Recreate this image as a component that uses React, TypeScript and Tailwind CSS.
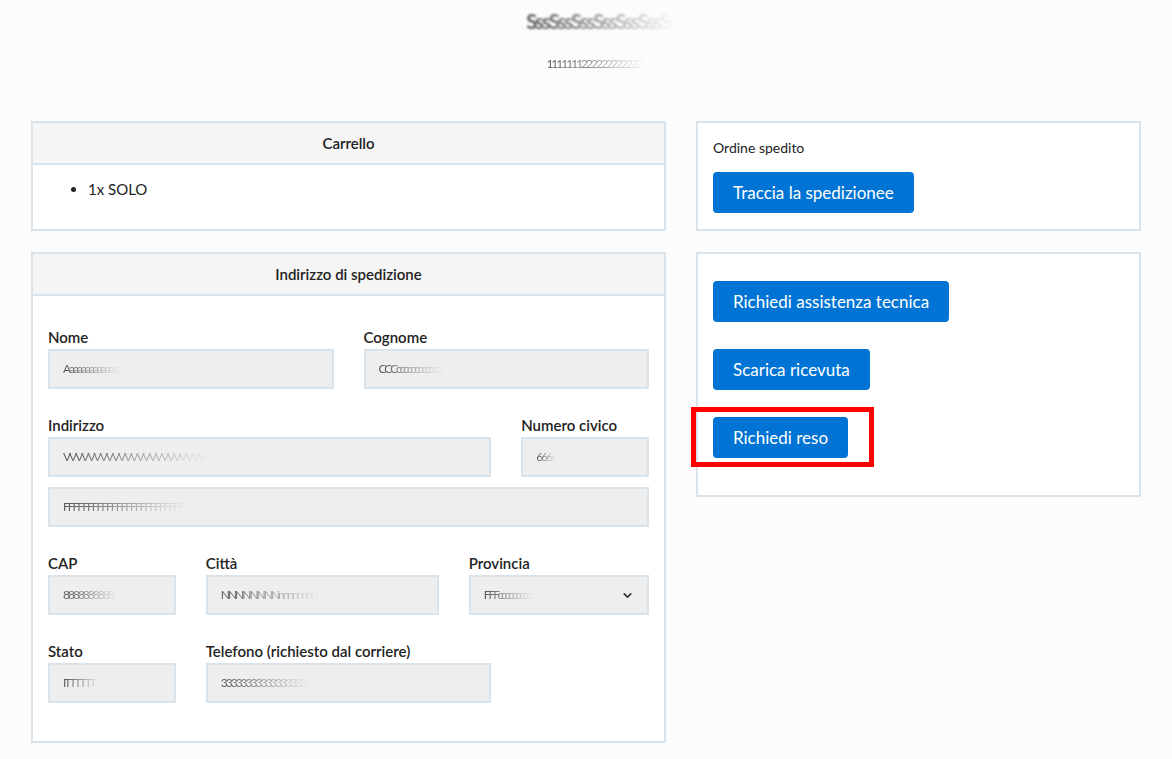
import { ChevronDown } from 'lucide-react'

const FONT = { fontFamily: 'Lato, "Open Sans", "Liberation Sans", sans-serif' }

function Blur({ text, className = '' }: { text: string; className?: string }) {
  return (
    <span
      className={`inline-block whitespace-nowrap bg-gradient-to-r from-[#555] via-[#a0a0a0] to-transparent bg-clip-text text-transparent blur-[0.5px] tracking-[-2px] ${className}`}
    >
      {text}
    </span>
  )
}

function Field({ label, value, span, select }: { label?: string; value: string; span: string; select?: boolean }) {
  return (
    <div className={span}>
      {label && <div className="h-6 text-[15px] font-semibold leading-6 text-[#222]">{label}</div>}
      <div className="flex h-10 items-center border-2 border-[#d8e3ec] bg-[#eeeeee] px-[13px] text-[12px]">
        <Blur text={value} />
        {select && <ChevronDown size={13} strokeWidth={3} className="ml-auto text-[#333]" />}
      </div>
    </div>
  )
}

function Btn({ children }: { children: React.ReactNode }) {
  return (
    <button className="h-[41px] self-start rounded-[4px] bg-[#0074d4] px-5 text-[17px] text-white">
      {children}
    </button>
  )
}

export default function App() {
  return (
    <div className="min-h-[759px] bg-[#fcfcfc] text-[#222]" style={FONT}>
      {/* Header (blurred) */}
      <div className="flex h-[121px] flex-col items-center pt-[6px]">
        <Blur text="SssSssSssSssSssSssSs" className="ml-[30px] blur-[1px] text-[20px] font-bold tracking-[-2px]" />
        <Blur text="11111112222222222222" className="ml-[20px] mt-[19px] text-[12px]" />
      </div>

      <div className="mx-auto flex w-[1110px] gap-[30px]">
        {/* Left column */}
        <div className="flex w-[635px] flex-col gap-[21px]">
          <div className="border-2 border-[#d8e3ec] bg-white">
            <div className="h-[42px] border-b-2 border-[#d8e3ec] bg-[#f5f5f5] text-center text-[15px] font-semibold leading-[40px]">
              Carrello
            </div>
            <div className="px-[15px] pt-3 pb-[12px]">
              <ul className="mb-4 list-disc pl-10 text-[15px] leading-6">
                <li>1x SOLO</li>
              </ul>
            </div>
          </div>

          <div className="border-2 border-[#d8e3ec] bg-white">
            <div className="h-[42px] border-b-2 border-[#d8e3ec] bg-[#f5f5f5] text-center text-[15px] font-semibold leading-[40px]">
              Indirizzo di spedizione
            </div>
            <div className="grid grid-cols-12 gap-x-[30px] px-[15px] pt-[29px] pb-[38px]">
              <Field span="col-span-6 mb-6" label="Nome" value="Aaaaaaaaaaaaaa" />
              <Field span="col-span-6 mb-6" label="Cognome" value="CCCccccccccccccc" />
              <Field span="col-span-9" label="Indirizzo" value="VVVVVVVVVVVVVVVVVVVVVVVV" />
              <Field span="col-span-3" label="Numero civico" value="6666" />
              <Field span="col-span-12 mt-[10px] mb-6" value="FFFFFFFFFFFFFFFFFFFFFFFFFF" />
              <Field span="col-span-3 mb-6" label="CAP" value="88888888888" />
              <Field span="col-span-5 mb-6" label="Città" value="NNNNNNNNnnnnnnnnn" />
              <Field span="col-span-4 mb-6" label="Provincia" value="FFFcccccccccc" select />
              <Field span="col-span-3" label="Stato" value="ITTTTTTT" />
              <Field span="col-span-6" label="Telefono (richiesto dal corriere)" value="333333333333333333" />
            </div>
          </div>
        </div>

        {/* Right column */}
        <div className="flex w-[445px] flex-col gap-[21px] self-start">
          <div className="flex flex-col border-2 border-[#d8e3ec] bg-white px-[15px] pt-[15px] pb-4">
            <div className="text-[14px] leading-5">Ordine spedito</div>
            <div className="mt-[14px] flex">
              <Btn>Traccia la spedizionee</Btn>
            </div>
          </div>

          <div className="flex flex-col gap-[27px] border-2 border-[#d8e3ec] bg-white px-[15px] pt-[27px] pb-[37px]">
            <Btn>Richiedi assistenza tecnica</Btn>
            <Btn>Scarica ricevuta</Btn>
            <div className="relative self-start">
              <Btn>Richiedi reso</Btn>
              <div className="pointer-events-none absolute -top-[10px] -bottom-[9px] -left-[22px] -right-[26px] border-[5px] border-[#ff0000]" />
            </div>
          </div>
        </div>
      </div>
    </div>
  )
}
